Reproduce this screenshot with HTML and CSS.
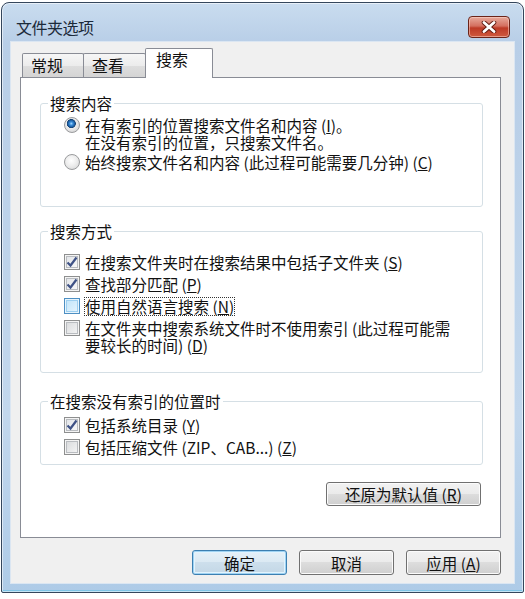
FILE: index.html
```html
<!DOCTYPE html>
<html lang="zh-CN">
<head>
    <meta charset="UTF-8">
    <title>文件夹选项</title>
    <link rel="stylesheet" href="styles.css">
</head>
<body>
    <div class="window">
        <div class="titlebar">
            <span class="title">文件夹选项</span>
            <button class="close" title="关闭">
                <svg width="16" height="12" viewBox="0 0 16 12">
                    <path d="M3 1.5 L13 10.5 M13 1.5 L3 10.5" stroke="#5e1a10" stroke-width="4.6" stroke-linecap="round"/>
                    <path d="M3 1.5 L13 10.5 M13 1.5 L3 10.5" stroke="#ffffff" stroke-width="2.8" stroke-linecap="round"/>
                </svg>
            </button>
        </div>

        <div class="client">
            <div class="tabs">
                <div class="tab">常规</div>
                <div class="tab">查看</div>
                <div class="tab active">搜索</div>
            </div>

            <div class="panel">
                <!-- 搜索内容 -->
                <fieldset class="group group-content">
                    <legend>搜索内容</legend>
                    <div class="options">
                        <label class="option">
                            <span class="radio checked"></span>
                            <span class="text">在有索引的位置搜索文件名和内容 (<u>I</u>)。<br>在没有索引的位置，只搜索文件名。</span>
                        </label>
                        <label class="option">
                            <span class="radio"></span>
                            <span class="text">始终搜索文件名和内容 (此过程可能需要几分钟) (<u>C</u>)</span>
                        </label>
                    </div>
                </fieldset>

                <!-- 搜索方式 -->
                <fieldset class="group group-method">
                    <legend>搜索方式</legend>
                    <div class="options">
                        <label class="option">
                            <span class="check checked"><svg width="14" height="14" viewBox="0 0 14 14"><path d="M2.5 7.5 L5.5 10.5 L11.5 2.5" fill="none" stroke="#3f5286" stroke-width="2.2"/></svg></span>
                            <span class="text">在搜索文件夹时在搜索结果中包括子文件夹 (<u>S</u>)</span>
                        </label>
                        <label class="option">
                            <span class="check checked"><svg width="14" height="14" viewBox="0 0 14 14"><path d="M2.5 7.5 L5.5 10.5 L11.5 2.5" fill="none" stroke="#3f5286" stroke-width="2.2"/></svg></span>
                            <span class="text">查找部分匹配 (<u>P</u>)</span>
                        </label>
                        <label class="option">
                            <span class="check hover"></span>
                            <span class="text focused">使用自然语言搜索 (<u>N</u>)</span>
                        </label>
                        <label class="option">
                            <span class="check"></span>
                            <span class="text">在文件夹中搜索系统文件时不使用索引 (此过程可能需<br>要较长的时间) (<u>D</u>)</span>
                        </label>
                    </div>
                </fieldset>

                <!-- 在搜索没有索引的位置时 -->
                <fieldset class="group group-unindexed">
                    <legend>在搜索没有索引的位置时</legend>
                    <div class="options">
                        <label class="option">
                            <span class="check checked"><svg width="14" height="14" viewBox="0 0 14 14"><path d="M2.5 7.5 L5.5 10.5 L11.5 2.5" fill="none" stroke="#3f5286" stroke-width="2.2"/></svg></span>
                            <span class="text">包括系统目录 (<u>Y</u>)</span>
                        </label>
                        <label class="option">
                            <span class="check"></span>
                            <span class="text">包括压缩文件 (ZIP、CAB...) (<u>Z</u>)</span>
                        </label>
                    </div>
                </fieldset>

                <div class="panel-actions">
                    <button class="btn btn-restore">还原为默认值 (<u>R</u>)</button>
                </div>
            </div>

            <div class="actions">
                <button class="btn default">确定</button>
                <button class="btn">取消</button>
                <button class="btn">应用 (<u>A</u>)</button>
            </div>
        </div>
    </div>
</body>
</html>
```

FILE: styles.css
```css
body {
    margin: 0;
    padding: 0;
    background-color: #ffffff;
    font-family: "Noto Sans CJK SC", "Liberation Sans", sans-serif;
    font-size: 15.5px;
    color: #111;
}

.window {
    box-sizing: border-box;
    width: 523px;
    height: 591px;
    margin: 2px 0 0 1px;
    padding: 0 9px 9px 9px;
    border: 1px solid #34465c;
    border-radius: 8px 8px 2px 2px;
    background: linear-gradient(#c9dcef, #b8cee7 40px, #c2d7ed 70%, #aecbe7);
    box-shadow: inset 0 0 0 1px rgba(255, 255, 255, 0.55), inset 0 -2px 0 #7ec4e6;
    display: flex;
    flex-direction: column;
}

.titlebar {
    box-sizing: border-box;
    height: 39px;
    padding: 8px 4px 0 5px;
    display: flex;
    justify-content: space-between;
    align-items: center;
}

.title {
    font-size: 16px;
    color: #1c2a3a;
    letter-spacing: -0.5px;
}

.close {
    width: 42px;
    height: 22px;
    padding: 0;
    border: 1px solid #6b2419;
    border-radius: 4px;
    background: linear-gradient(#e8aa9c, #d46f5f 45%, #bd3a26 55%, #cf5a3f);
    box-shadow: inset 0 0 0 1px rgba(255, 220, 210, 0.5);
    display: flex;
    align-items: center;
    justify-content: center;
}

.client {
    box-sizing: border-box;
    height: 541px;
    padding: 7px 13px 0 9px;
    background-color: #f0f0f0;
    box-shadow: 0 0 0 1px #dbe6f2;
    display: flex;
    flex-direction: column;
}

/* onglets */
.tabs {
    display: flex;
    align-items: flex-end;
    height: 28px;
    margin-left: 2px;
}

.tab {
    box-sizing: border-box;
    height: 24px;
    line-height: 22px;
    padding-left: 8px;
    border: 1px solid #898c95;
    border-bottom: none;
    border-radius: 2px 2px 0 0;
    background: linear-gradient(#f6f6f6, #ececec 50%, #dedede 51%, #d4d4d4);
    width: 62px;
    font-size: 16px;
}

.tab + .tab {
    margin-left: -1px;
    width: 63px;
}

.tab.active {
    position: relative;
    z-index: 1;
    width: 68px;
    height: 30px;
    margin-bottom: -1px;
    padding-top: 2px;
    line-height: 17px;
    padding-left: 10px;
    background: #ffffff;
}

.panel {
    box-sizing: border-box;
    width: 481px;
    height: 461px;
    border: 1px solid #898c95;
    background-color: #ffffff;
    display: flex;
    flex-direction: column;
}

/* groupes */
.group {
    margin: 0 17px 0 19px;
    padding: 0 7px;
    border: 1px solid #d5dfe5;
    border-radius: 3px;
    min-width: 0;
}

.group legend {
    padding: 0 2px;
    line-height: 18px;
}

.options {
    padding-left: 16px;
}

.option {
    display: flex;
    align-items: flex-start;
    gap: 5px;
    line-height: 17px;
}

.option + .option {
    margin-top: 5px;
}

.group-content {
    margin-top: 16px;
}

.group-content .options {
    padding-top: 5px;
    padding-bottom: 35px;
}

.group-content .option + .option {
    margin-top: 3px;
}

.group-method {
    margin-top: 15px;
}

.group-method .options {
    padding-top: 14px;
    padding-bottom: 18px;
}

.group-unindexed {
    margin-top: 19px;
}

.group-unindexed .options {
    padding-top: 7px;
    padding-bottom: 8px;
}

.text u {
    text-decoration-thickness: 1px;
    text-underline-offset: 1px;
}

.text.focused {
    outline: 1px dotted #333;
    outline-offset: 0;
}

/* contrôles */
.radio {
    flex: none;
    box-sizing: border-box;
    width: 16px;
    height: 16px;
    border-radius: 50%;
    border: 1px solid #9a9b9d;
    background: radial-gradient(circle at 45% 40%, #ffffff 0%, #ececec 50%, #cfd0d1 100%);
}

.radio.checked {
    background:
        radial-gradient(circle at 45% 40%, #a9dcff 0, #3b8fdc 1.6px, #1b5c9f 3.4px, #123f70 4.2px, transparent 4.8px),
        radial-gradient(circle at 45% 40%, #ffffff 0%, #e6e6e6 55%, #c4c5c7 100%);
}

.check {
    flex: none;
    box-sizing: border-box;
    width: 16px;
    height: 16px;
    border: 1px solid #8e8f8f;
    background: linear-gradient(135deg, #d6d8da, #f7f7f7);
    box-shadow: inset 0 0 0 1px #f4f4f4, inset 0 0 0 2px #b9bcc0;
    display: flex;
    align-items: center;
    justify-content: center;
}

.check.checked {
    background: linear-gradient(135deg, #dfe2e6, #fbfbfb);
}

.check.hover {
    border-color: #4d8fc3;
    background: linear-gradient(135deg, #bfe3f9, #e9f6fe);
    box-shadow: inset 0 0 0 1px #e8f5fd, inset 0 0 0 2px #9dcff0;
}

/* boutons */
.btn {
    box-sizing: border-box;
    height: 25px;
    padding: 0;
    font-family: inherit;
    font-size: 15.5px;
    line-height: 20px;
    color: #111;
    border: 1px solid #707070;
    border-radius: 3px;
    background: linear-gradient(#f2f2f2 0%, #ebebeb 49%, #dddddd 50%, #cfcfcf 100%);
    box-shadow: inset 0 0 0 1px #fbfbfb;
}

.btn.default {
    border-color: #3c7fb1;
    background: linear-gradient(#e6f1f8 0%, #dbe9f3 49%, #cddfec 50%, #c3d7e6 100%);
    box-shadow: inset 0 0 0 1px #9fd3f3, inset 0 0 0 2px #e2f3fd;
}

.panel-actions {
    display: flex;
    justify-content: flex-end;
    margin: 17px 19px 0 0;
}

.btn-restore {
    width: 155px;
    height: 24px;
}

.actions {
    display: flex;
    justify-content: flex-end;
    gap: 12px;
    margin-top: 12px;
}

.actions .btn {
    width: 95px;
}
```
